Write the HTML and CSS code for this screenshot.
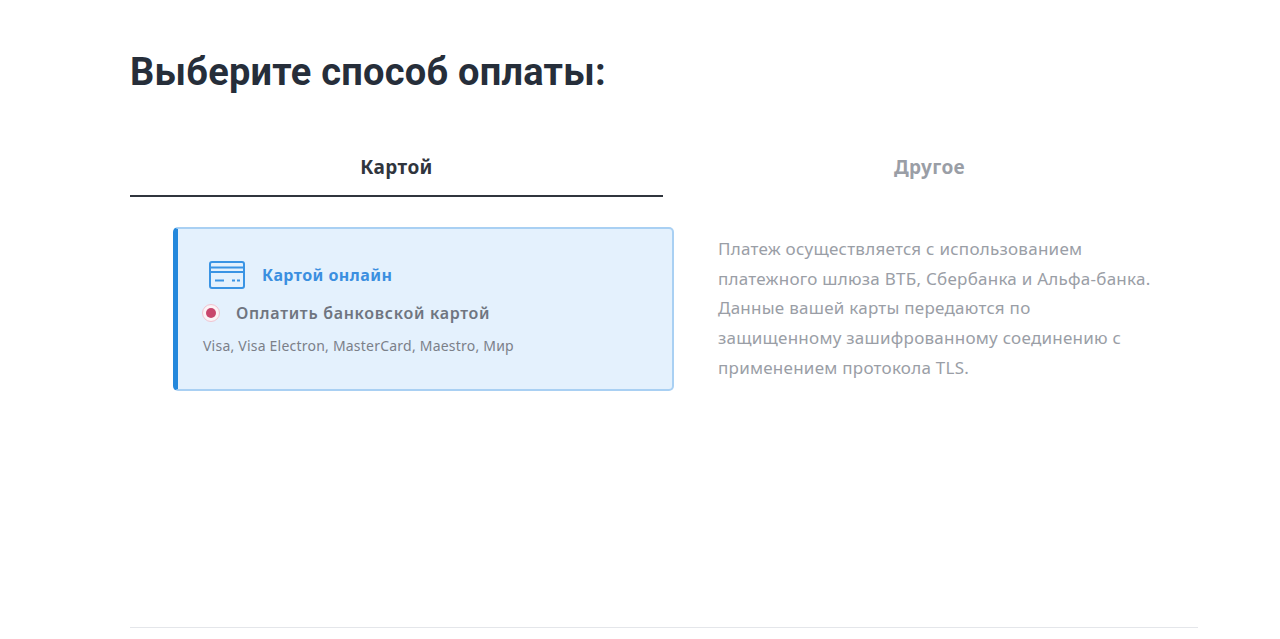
FILE: index.html
```html
<!DOCTYPE html>
<html lang="ru">
<head>
    <meta charset="UTF-8">
    <title>Выберите способ оплаты</title>
    <link rel="stylesheet" href="styles.css">
</head>
<body>
    <div class="container">
        <h1>Выберите способ оплаты:</h1>

        <div class="tabs">
            <div class="tab active">Картой</div>
            <div class="tab">Другое</div>
        </div>

        <div class="pay-row">
            <div class="pay-card">
                <div class="card-head">
                    <svg class="card-icon" width="38" height="30" viewBox="0 0 38 30" fill="none" stroke="#3a94e4" stroke-width="2">
                        <rect x="2" y="2" width="34" height="26" rx="2"/>
                        <path d="M2 7.500h34M2 12h34"/>
                        <path d="M7 20.500h9M24 20.500h3M29 20.500h3" stroke-width="2.200"/>
                    </svg>
                    <span class="card-title">Картой онлайн</span>
                </div>
                <div class="radio-row">
                    <span class="radio"><span class="radio-dot"></span></span>
                    <span class="radio-label">Оплатить банковской картой</span>
                </div>
                <div class="card-brands">Visa, Visa Electron, MasterCard, Maestro, Мир</div>
            </div>

            <p class="pay-note">Платеж осуществляется с использованием платежного шлюза ВТБ, Сбербанка и Альфа-банка. Данные вашей карты передаются по защищенному зашифрованному соединению с применением протокола TLS.</p>
        </div>

        <div class="bottom-line"></div>
    </div>
</body>
</html>
```

FILE: styles.css
```css
body {
    margin: 0;
    background: #ffffff;
    color: #262e3a;
    font-family: 'Noto Sans', sans-serif;
}

.container {
    width: 1068px;
    height: 639px;
    margin-left: 130px;
    display: flex;
    flex-direction: column;
    overflow: hidden;
}

h1 {
    margin: 49px 0 0 0;
    font-family: Roboto, sans-serif;
    font-size: 38px;
    line-height: 46px;
    font-weight: 700;
    letter-spacing: 0.25px;
    color: #262e3a;
}

.tabs {
    display: flex;
    margin-top: 50px;
}

.tab {
    width: 533px;
    height: 52px;
    line-height: 44px;
    text-align: center;
    font-size: 19px;
    font-weight: 700;
    letter-spacing: 0.4px;
    color: #9a9ea6;
    box-sizing: border-box;
}

.tab.active {
    color: #30353d;
    border-bottom: 2px solid #30353d;
}

.pay-row {
    display: flex;
    margin-top: 30px;
    margin-left: 43px;
}

.pay-card {
    width: 501px;
    height: 164px;
    box-sizing: border-box;
    background: #e4f1fd;
    border: 2px solid #a9d0f3;
    border-left: 5px solid #2488dc;
    border-radius: 5px;
    padding: 31px 0 0 30px;
}

.card-head {
    display: flex;
    align-items: center;
    gap: 16px;
}

.card-title {
    font-size: 16px;
    font-weight: 700;
    letter-spacing: 0.45px;
    color: #3b8fe0;
}

.radio-row {
    display: flex;
    align-items: center;
    gap: 16px;
    margin-top: 12px;
    margin-left: -6px;
}

.radio {
    width: 18px;
    height: 18px;
    box-sizing: border-box;
    border: 1px solid #f0c4d0;
    border-radius: 50%;
    background: #fbf3f6;
    display: flex;
    align-items: center;
    justify-content: center;
}

.radio-dot {
    width: 10px;
    height: 10px;
    border-radius: 50%;
    background: #c8466c;
}

.radio-label {
    font-size: 16px;
    font-weight: 600;
    letter-spacing: 0.7px;
    color: #6f7580;
}

.card-brands {
    margin-top: 12px;
    margin-left: -5px;
    font-size: 14px;
    letter-spacing: 0.22px;
    color: #7b8089;
}

.pay-note {
    width: 438px;
    margin: 7px 0 0 44px;
    font-size: 17px;
    line-height: 29.700px;
    letter-spacing: 0.25px;
    color: #9a9ea6;
}

.bottom-line {
    margin-top: auto;
    margin-bottom: 11px;
    height: 1px;
    background: #e4e6ea;
}
```
